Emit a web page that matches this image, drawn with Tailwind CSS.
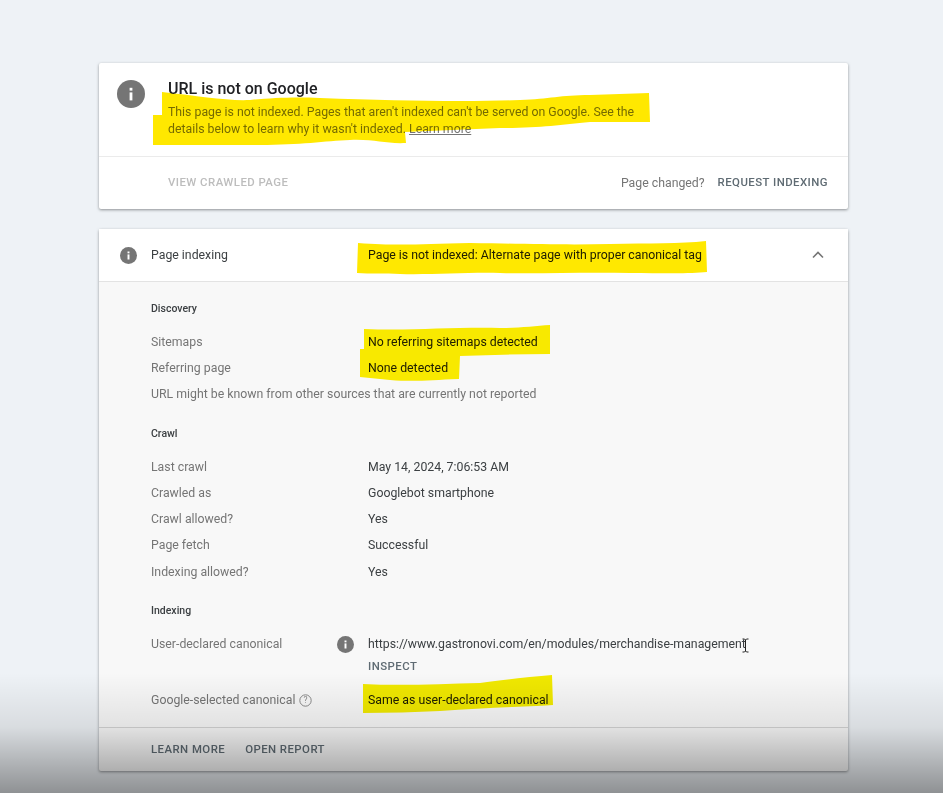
<!DOCTYPE html>
<html lang="en">
  <head>
    <meta charset="utf-8" />
    <title>URL Inspection</title>
    <script src="https://cdn.jsdelivr.net/npm/@tailwindcss/browser@4"></script>
  </head>
  <body class="relative h-[793px] w-[943px] overflow-hidden bg-[#eef2f6] font-['Roboto',sans-serif] text-[12.3px] text-[#3c4043]">
    <main class="blur-[0.35px] pl-[99px] pt-[63px] w-[848px]">
      <!-- verdict card -->
      <section class="h-[146px] bg-white rounded-[2px] shadow-[0_1px_3px_rgba(60,64,67,0.55)]">
        <div class="h-[94px] flex border-b border-[#ebebeb]">
          <div class="w-[69px] pl-[18px] pt-[17px]">
            <svg class="w-[28px] h-[28px]" viewBox="0 0 28 28"><circle cx="14" cy="14" r="14" fill="#757575" /><rect x="12.6" y="12.4" width="2.8" height="8" fill="#fff" /><rect x="12.6" y="7.8" width="2.8" height="2.8" fill="#fff" /></svg>
          </div>
          <div class="pt-[16px]">
            <h1 class="text-[16px] leading-[20px] font-medium text-[#202124]">URL is not on Google</h1>
            <p class="mt-[5px] w-[490px] leading-[16.5px] text-[#757575]">This page is not indexed. Pages that aren't indexed can't be served on Google. See the details below to learn why it wasn't indexed. <a class="underline">Learn more</a></p>
          </div>
        </div>
        <div class="h-[52px] flex items-center pl-[69px] pr-[20px] text-[11.4px]">
          <span class="font-medium tracking-[0.45px] text-[#bdbdbd]">VIEW CRAWLED PAGE</span>
          <span class="ml-auto text-[12.3px] text-[#757575]">Page changed?</span>
          <span class="ml-[13px] font-medium tracking-[0.45px] text-[#5f6b73]">REQUEST INDEXING</span>
        </div>
      </section>

      <!-- page indexing card -->
      <section class="mt-[20px] h-[542px] bg-[#f8f8f8] rounded-[2px] shadow-[0_1px_3px_rgba(60,64,67,0.55)]">
        <header class="h-[53px] flex items-center bg-white border-b border-[#e3e3e3] pr-[24px]">
          <div class="w-[52px] pl-[21px]">
            <svg class="w-[17px] h-[17px]" viewBox="0 0 28 28"><circle cx="14" cy="14" r="14" fill="#757575" /><rect x="12.4" y="12.2" width="3.2" height="8.4" fill="#fff" /><rect x="12.4" y="7.4" width="3.2" height="3" fill="#fff" /></svg>
          </div>
          <span class="w-[217px]">Page indexing</span>
          <span class="text-[#202124]">Page is not indexed: Alternate page with proper canonical tag</span>
          <svg class="ml-auto w-[12px] h-[8px]" viewBox="0 0 12 8"><path d="M1 6.5 L6 1.5 L11 6.5" fill="none" stroke="#757575" stroke-width="1.6" /></svg>
        </header>

        <div class="pl-[52px] pt-[20px]">
          <h2 class="text-[10.5px] leading-[14px] font-medium text-[#3c4043]">Discovery</h2>
          <div class="mt-[13px] grid grid-cols-[217px_1fr] auto-rows-[26.25px] items-center">
            <span class="text-[#757575]">Sitemaps</span><span class="text-[#202124]">No referring sitemaps detected</span>
            <span class="text-[#757575]">Referring page</span><span class="text-[#202124]">None detected</span>
            <span class="col-span-2 text-[#757575]">URL might be known from other sources that are currently not reported</span>
          </div>

          <h2 class="mt-[19px] text-[10.5px] leading-[14px] font-medium text-[#3c4043]">Crawl</h2>
          <div class="mt-[13px] grid grid-cols-[217px_1fr] auto-rows-[26.25px] items-center">
            <span class="text-[#757575]">Last crawl</span><span class="text-[#3c4043]">May 14, 2024, 7:06:53 AM</span>
            <span class="text-[#757575]">Crawled as</span><span class="text-[#3c4043]">Googlebot smartphone</span>
            <span class="text-[#757575]">Crawl allowed?</span><span class="text-[#3c4043]">Yes</span>
            <span class="text-[#757575]">Page fetch</span><span class="text-[#3c4043]">Successful</span>
            <span class="text-[#757575]">Indexing allowed?</span><span class="text-[#3c4043]">Yes</span>
          </div>

          <h2 class="mt-[19px] text-[10.5px] leading-[14px] font-medium text-[#3c4043]">Indexing</h2>
          <div class="mt-[13px] grid grid-cols-[217px_1fr] items-start">
            <div class="h-[26px] flex items-center text-[#757575]">
              <span class="w-[186px]">User-declared canonical</span>
              <svg class="w-[17px] h-[17px]" viewBox="0 0 28 28"><circle cx="14" cy="14" r="14" fill="#757575" /><rect x="12.4" y="12.2" width="3.2" height="8.4" fill="#fff" /><rect x="12.4" y="7.4" width="3.2" height="3" fill="#fff" /></svg>
            </div>
            <div>
              <div class="h-[26px] flex items-center text-[#3c4043]">https://www.gastronovi.com/en/modules/merchandise-management</div>
              <div class="h-[20px] flex items-center text-[11.4px] font-medium tracking-[0.45px] text-[#5f6b73]">INSPECT</div>
            </div>
            <div class="mt-[10px] h-[26px] flex items-center text-[#757575]">
              <span>Google-selected canonical</span>
              <svg class="ml-[4px] w-[13px] h-[13px]" viewBox="0 0 13 13"><circle cx="6.5" cy="6.5" r="5.7" fill="none" stroke="#8a8a8a" /><text x="6.5" y="9.4" text-anchor="middle" font-size="8.5" fill="#8a8a8a">?</text></svg>
            </div>
            <div class="mt-[10px] h-[26px] flex items-center text-[#202124]">Same as user-declared canonical</div>
          </div>
        </div>

        <footer class="mt-[14px] h-[44px] flex items-center gap-[20px] pl-[52px] pt-[1px] border-t border-[#d5d5d5] text-[11.4px] font-medium tracking-[0.45px] text-[#5f6b73]">
          <span>LEARN MORE</span>
          <span>OPEN REPORT</span>
        </footer>
      </section>
    </main>

    <!-- dark fade along the bottom of the frame -->
    <div class="absolute inset-x-0 bottom-0 h-[120px] bg-linear-to-b from-black/0 via-black/9 via-45% to-black/40"></div>

    <!-- yellow marker strokes drawn over the text -->
    <svg class="absolute inset-0 mix-blend-multiply blur-[0.4px]" width="943" height="793" viewBox="0 0 943 793" fill="#ffe800">
      <path d="M162 92 C200 96 225 101 250 100 C275 98 290 97 320 98 C400 101 470 102 520 100 C550 99 560 95 590 95 L649 93 L650 122 L590 122 C560 125 540 128 500 128 L405 132 L406 143 C385 144 375 139 350 140 C325 141 300 145 260 145 L153 145 L153 115 L162 115 Z" />
      <path d="M358 243 C400 246 420 244 470 243 C530 244 570 245 610 244 C650 243 680 244 706 241 L707 272 C690 274 660 273 630 273 C580 272 540 274 500 273 C470 272 430 275 400 274 C385 273 370 274 357 273 Z" />
      <path fill="#fff000" d="M364 329 C410 331 450 327 500 328 C520 328 535 326 550 325 L550 354 C520 354 490 355 460 356 L459 379 C430 380 415 382 390 380 C380 379 370 378 360 377 L360 349 L364 349 Z" />
      <path fill="#f8f000" d="M363 684 C400 686 440 684 480 683 C500 680 530 677 552 675 L553 705 C520 707 480 708 440 711 C415 712 390 713 363 713 Z" />
    </svg>

    <!-- text cursor -->
    <svg class="absolute left-[741px] top-[638px] w-[9px] h-[15px]" viewBox="0 0 9 15"><path d="M1.5 1 H3.5 L4.5 2 L5.5 1 H7.5 M4.5 2 V13 M1.5 14 H3.5 L4.5 13 L5.5 14 H7.5" fill="none" stroke="#222" stroke-width="1" /></svg>
  </body>
</html>
